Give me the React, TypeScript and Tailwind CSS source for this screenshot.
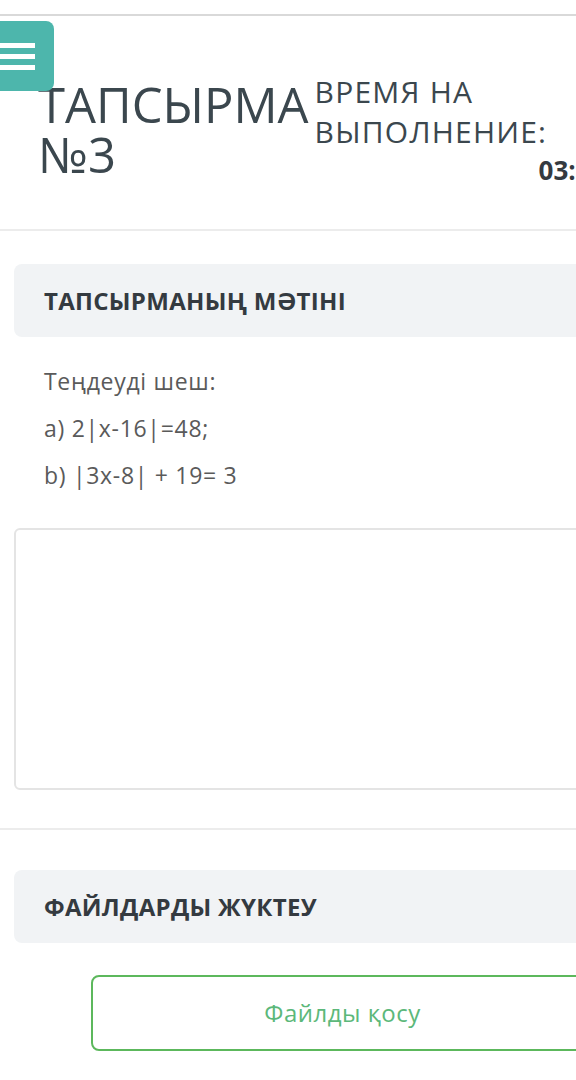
import React from "react";

const SectionHeader = ({ title }: { title: string }) => (
  <div className="ml-[14px] flex h-[73px] items-center rounded-lg bg-[#f1f3f5] pl-[30px]">
    <span className="text-[24px] font-bold tracking-[0.3px] text-[#343a40]">
      {title}
    </span>
  </div>
);

const App = () => {
  return (
    <div className="relative h-[1080px] w-[576px] overflow-hidden bg-white font-['Open_Sans',sans-serif] text-[#37474f]">
      <div className="w-[680px]">
        {/* top bar */}
        <div className="h-[16px] border-b-2 border-[#d9d9d9] bg-white" />

        {/* title */}
        <div className="flex items-start pb-[41px] pl-[38px]">
          <div className="mt-[63px] text-[49px] leading-[50px] text-[#3b474e]">
            <div>ТАПСЫРМА</div>
            <div>№3</div>
          </div>
          <div className="ml-[6px] mt-[56px] text-[30px] leading-[40px] tracking-[1.2px] text-[#3b474e]">
            <div>ВРЕМЯ НА</div>
            <div>ВЫПОЛНЕНИЕ:</div>
            <div className="pl-[224px] text-[26px] font-bold leading-[36px] tracking-normal text-[#343a40]">
              03:00:00
            </div>
          </div>
        </div>

        <div className="border-t-2 border-[#ececec]" />

        {/* task text */}
        <div className="pt-[33px]">
          <SectionHeader title="ТАПСЫРМАНЫҢ МӘТІНІ" />
          <div className="mt-[21px] pl-[44px] text-[23px] leading-[47px] tracking-[0.7px] text-[#5a5a5a]">
            <p>Теңдеуді шеш:</p>
            <p>a) 2|x-16|=48;</p>
            <p>b) |3x-8| + 19= 3</p>
          </div>
          <div className="ml-[14px] mt-[29px] h-[262px] rounded-md border-2 border-[#e4e4e4] bg-white" />
        </div>

        <div className="mt-[38px] border-t-2 border-[#ececec]" />

        {/* files */}
        <div className="pt-[40px]">
          <SectionHeader title="ФАЙЛДАРДЫ ЖҮКТЕУ" />
          <div className="ml-[91px] mt-[32px] flex h-[76px] w-[503px] items-center justify-center rounded-lg border-2 border-[#5cb85c] text-[24px] tracking-[0.5px] text-[#5cb87a]">
            Файлды қосу
          </div>
        </div>
      </div>

      {/* menu button */}
      <button className="absolute left-[-10px] top-[21px] flex h-[70px] w-[64px] flex-col justify-center gap-[6px] rounded-lg bg-[#4db6ac] pl-[10px]">
        <span className="block h-[5px] w-[35px] bg-white" />
        <span className="block h-[5px] w-[35px] bg-white" />
        <span className="block h-[5px] w-[35px] bg-white" />
      </button>
    </div>
  );
};

export default App;
